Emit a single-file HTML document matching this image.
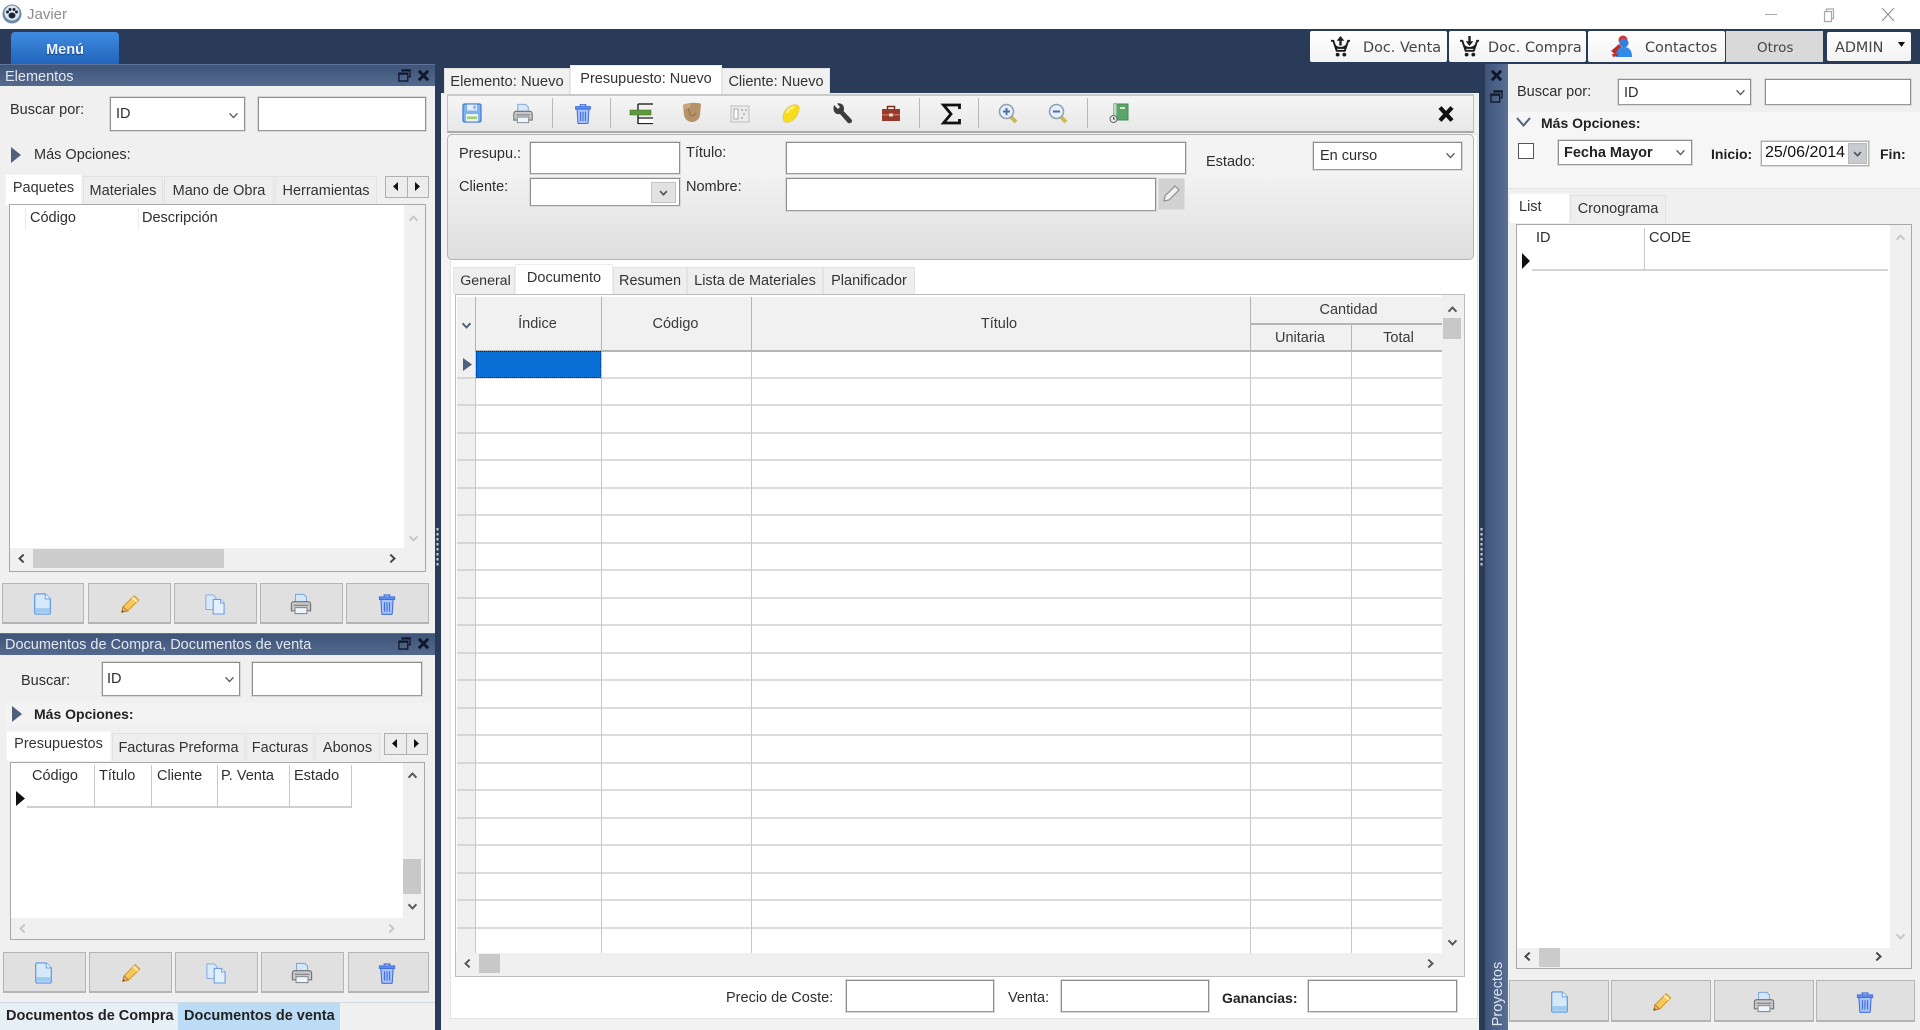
<!DOCTYPE html>
<html lang="es"><head><meta charset="utf-8"><title>Javier</title>
<style>
html,body{margin:0;padding:0;width:1920px;height:1030px;overflow:hidden;background:#2a3b59}
*{box-sizing:border-box}
body{position:relative;font-family:"Liberation Sans",sans-serif;font-size:14.5px;color:#2e2e2e}
.b{position:absolute}
.t{position:absolute;white-space:nowrap;line-height:18px;height:18px}
.bold{font-weight:bold;color:#222;font-size:14px}
.in{position:absolute;background:#fff;border:1px solid #8e8e8e;border-bottom-color:#9a9a9a;box-shadow:0 0 0 1px #d8d8d8}
.btn{position:absolute;background:#e0e0e0;border:1px solid #b4b4b4;border-bottom-width:2px}
.tab{position:absolute;background:#eeeeee;border:1px solid #e2e2e2;border-bottom:0;text-align:center;white-space:nowrap;color:#333}
.tab.on{background:#fff;border-color:#e8e8e8;color:#333}
.hd{position:absolute;height:22px;background:linear-gradient(#3f5479,#54698f);border-top:1px solid #5f7398}
.hd span{position:absolute;left:5px;top:2px;line-height:19px;color:#e4e8ee;font-size:14.5px;white-space:nowrap}
.top{position:absolute;background:linear-gradient(#fff,#f3f3f3);border-radius:2px;font-family:"DejaVu Sans",sans-serif;font-size:14.4px;color:#444}
.gh{position:absolute;background:#f1f1f1;border-right:1px solid #b5b5b5;border-bottom:2px solid #b5b5b5;text-align:center;color:#3a3a3a}
svg{position:absolute;overflow:visible}
</style></head><body>

<svg width="0" height="0" style="position:absolute">
<defs>
<symbol id="doc" viewBox="0 0 20 24"><path d="M1.500 2.500a1.500 1.500 0 0 1 1.500-1.500h10l5.500 5.500v15a1.500 1.500 0 0 1-1.500 1.500h-14a1.500 1.500 0 0 1-1.500-1.500z" fill="#d6e9fb" stroke="#5a97e4" stroke-width="1.300"/><path d="M13 1v5.500h5.500" fill="#eef6ff" stroke="#5a97e4"/><path d="M2.500 16.500h15v5h-15z" fill="#9ccbf2"/></symbol>
<symbol id="pen" viewBox="0 0 24 24"><path d="M3 21l1.500-6L16.500 3l5 4.500L9.500 19.500z" fill="#f7c95a" stroke="#d69a2c" stroke-width="1.200"/><path d="M14.500 5l5 4.500" stroke="#fff1b8" stroke-width="2"/><path d="M3 21l1.500-6 4.800 4.500z" fill="#e8b07a" stroke="#c27b2f"/><path d="M3 21l.6-2.500 2 1.900z" fill="#6b4a22"/></symbol>
<symbol id="copy" viewBox="0 0 22 24"><path d="M1 2h8l3 3v13H1z" fill="#d9eafb" stroke="#7da6e2"/><path d="M9 7h8l4 4v12H9z" fill="#e2effc" stroke="#6f9be0" stroke-width="1.200"/><path d="M17 7v4h4" fill="#f3f9ff" stroke="#6f9be0"/></symbol>
<symbol id="print" viewBox="0 0 24 24"><path d="M6 1.500h9l3 3V11H6z" fill="#d4e7fa" stroke="#7aa2d8"/><path d="M1.500 12a2.500 2.500 0 0 1 2.500-2.500h16a2.500 2.500 0 0 1 2.500 2.500v7.500h-21z" fill="#c9c9c9" stroke="#6f6f6f" stroke-width="1.200"/><path d="M4 13.500h16" stroke="#8a8a8a" stroke-width="1.500"/><path d="M5.500 16h13v6.500h-13z" fill="#eef5fc" stroke="#7a7f88"/></symbol>
<symbol id="trash" viewBox="0 0 20 24"><path d="M7 3.500V2h6v1.500" fill="none" stroke="#3f6fe0" stroke-width="1.500"/><path d="M1.500 4h17v3h-17z" fill="#5f8cef" stroke="#3f6fe0"/><path d="M3.200 7h13.600l-1 15.500a1 1 0 0 1-1 1H5.200a1 1 0 0 1-1-1z" fill="#a9c4f8" stroke="#3f6fe0" stroke-width="1.200"/><path d="M7.200 10v10.500M10 10v10.500M12.800 10v10.500" stroke="#3f6fe0" stroke-width="1.300"/></symbol>
<symbol id="chev" viewBox="0 0 12 8"><path d="M1.500 1.500L6 6.300l4.500-4.800" fill="none" stroke="#555" stroke-width="1.500"/></symbol>
<symbol id="cup" viewBox="0 0 12 8"><path d="M1.500 6.500L6 1.700l4.500 4.800" fill="none" stroke="currentColor" stroke-width="2.200"/></symbol>
<symbol id="cdn" viewBox="0 0 12 8"><path d="M1.500 1.500L6 6.300l4.500-4.800" fill="none" stroke="currentColor" stroke-width="2.200"/></symbol>
<symbol id="cl" viewBox="0 0 8 12"><path d="M6.500 1.500L1.700 6l4.800 4.500" fill="none" stroke="currentColor" stroke-width="2.200"/></symbol>
<symbol id="cr" viewBox="0 0 8 12"><path d="M1.500 1.500L6.300 6l-4.800 4.500" fill="none" stroke="currentColor" stroke-width="2.200"/></symbol>
<symbol id="rest" viewBox="0 0 14 14"><path d="M4.500 3V1h8.500v7.500h-2.500" fill="none" stroke="#10182a" stroke-width="1.400"/><path d="M4 1.700h8.500" stroke="#10182a" stroke-width="2"/><path d="M1 4.500h9.500V13H1z" fill="none" stroke="#10182a" stroke-width="1.400"/><path d="M1 5.200h9.500" stroke="#10182a" stroke-width="2"/></symbol>
<symbol id="x" viewBox="0 0 14 14"><path d="M2 2l10 10M12 2L2 12" stroke="#10182a" stroke-width="3.200"/></symbol>
<symbol id="cart" viewBox="0 0 22 24"><path d="M1 6h2.500l3.500 10.500h8.500L19 6h2" fill="none" stroke="#1c1c1c" stroke-width="2"/><path d="M5 9.500c3 4 9 4 12 0l-1.500 5h-9z" fill="#1c1c1c"/><path d="M11 3v8" stroke="#1c1c1c" stroke-width="2.500"/><path d="M7 6l4-5 4 5z" fill="#1c1c1c"/><circle cx="8" cy="20.500" r="2" fill="#1c1c1c"/><circle cx="15" cy="20.500" r="2" fill="#1c1c1c"/></symbol>
<symbol id="cart2" viewBox="0 0 22 24"><path d="M1 6h2.500l3.500 10.500h8.500L19 6h2" fill="none" stroke="#1c1c1c" stroke-width="2"/><path d="M5 9.500c3 4 9 4 12 0l-1.500 5h-9z" fill="#1c1c1c"/><path d="M11 1v7" stroke="#1c1c1c" stroke-width="2.500"/><path d="M7 6.500l4 5 4-5z" fill="#1c1c1c"/><circle cx="8" cy="20.500" r="2" fill="#1c1c1c"/><circle cx="15" cy="20.500" r="2" fill="#1c1c1c"/></symbol>
</defs>
</svg>

<!-- title bar -->
<div class="b" style="left:0;top:0;width:1920px;height:29px;background:#fff"></div>
<svg style="left:2px;top:4px" width="20" height="20" viewBox="0 0 20 20"><circle cx="10" cy="10" r="9.500" fill="#6d8aa8"/><circle cx="10" cy="9" r="7.500" fill="#dfe6ee"/><ellipse cx="10" cy="11.500" rx="3.500" ry="3" fill="#1d2530"/><circle cx="5.500" cy="8" r="1.500" fill="#1d2530"/><circle cx="8" cy="5.500" r="1.500" fill="#1d2530"/><circle cx="12" cy="5.500" r="1.500" fill="#1d2530"/><circle cx="14.500" cy="8" r="1.500" fill="#1d2530"/></svg>
<div class="t" style="left:27px;top:6px;color:#8c8c8c;font-size:15px">Javier</div>
<svg style="left:1764px;top:8px" width="150" height="14" viewBox="0 0 150 14"><path d="M1 6.500h12" stroke="#a8a8a8"/><path d="M60.500 3.500h7v10h-7zM62.500 3.500v-2.500h7v9.500h-2" fill="none" stroke="#a8a8a8" stroke-width="1.200"/><path d="M118 0l12 13M130 0l-12 13" stroke="#8c8c8c" stroke-width="1"/></svg>

<!-- menu -->
<div class="b" style="left:11px;top:32px;width:108px;height:33px;border-radius:4px 4px 0 0;background:linear-gradient(#3f8be0,#2064ba);color:#eef4fb;font-weight:bold;font-size:14.5px;text-align:center;line-height:37px;text-shadow:0 1px 1px #123a70">Menú</div>

<!-- top buttons -->
<div class="top" style="left:1310px;top:31px;width:137px;height:31px"><svg style="left:20px;top:4px" width="21" height="23"><use href="#cart"/></svg><span class="t" style="left:53px;top:8px">Doc. Venta</span></div>
<div class="top" style="left:1449px;top:31px;width:137px;height:31px"><svg style="left:10px;top:4px" width="21" height="23"><use href="#cart2"/></svg><span class="t" style="left:39px;top:8px">Doc. Compra</span></div>
<div class="top" style="left:1588px;top:31px;width:137px;height:31px"><svg style="left:21px;top:3px" width="24" height="24" viewBox="0 0 24 24"><circle cx="14" cy="6" r="4.500" fill="#e0322e"/><path d="M2 17l8-7 3 4-7 6z" fill="#b92c2a"/><circle cx="15" cy="9" r="4.500" fill="#2f80e0"/><path d="M7 23c0-7 3-10 8-10s8 3 8 10z" fill="#2f8ae8"/><path d="M3 20l6-1 0 3-5 1z" fill="#c22f2b"/></svg><span class="t" style="left:57px;top:8px">Contactos</span></div>
<div class="top" style="left:1726px;top:31px;width:97px;height:31px;background:#d9d9d9;border-radius:0"><span class="t" style="left:31px;top:8px;font-size:13.5px">Otros</span></div>
<div class="top" style="left:1827px;top:32px;width:84px;height:29px"><span class="t" style="left:8px;top:7px">ADMIN</span><svg style="left:71px;top:10px" width="7" height="5"><path d="M0 0h7L3.500 5z" fill="#111"/></svg></div>

<!-- LEFT PANEL -->
<div class="b" style="left:0;top:64px;width:435px;height:966px;background:#f0f0f0"></div>
<div class="hd" style="left:0;top:64px;width:435px"><span style="top:3px">Elementos</span></div>
<svg style="left:398px;top:69px" width="13" height="13"><use href="#rest"/></svg>
<svg style="left:417px;top:69px" width="13" height="13"><use href="#x"/></svg>
<div class="t" style="left:10px;top:101px">Buscar por:</div>
<div class="in" style="left:110px;top:97px;width:135px;height:34px"></div>
<div class="t" style="left:116px;top:105px">ID</div>
<svg style="left:228px;top:112px" width="11" height="7"><use href="#chev"/></svg>
<div class="in" style="left:258px;top:97px;width:168px;height:34px"></div>
<svg style="left:11px;top:147px" width="10" height="16"><path d="M0 0l10 8-10 8z" fill="#4f5f7c"/></svg>
<div class="t" style="left:34px;top:146px">Más Opciones:</div>

<div class="tab on" style="left:5px;top:174px;width:77px;height:31px;line-height:26px;border-color:#f4f4f4">Paquetes</div>
<div class="tab" style="left:83px;top:176px;width:80px;height:28px;line-height:28px">Materiales</div>
<div class="tab" style="left:164px;top:176px;width:110px;height:28px;line-height:28px">Mano de Obra</div>
<div class="tab" style="left:275px;top:176px;width:102px;height:28px;line-height:28px">Herramientas</div>
<div class="b" style="left:385px;top:176px;width:44px;height:22px;background:#ececec;border:1px solid #b0b0b0"></div>
<div class="b" style="left:407px;top:176px;width:1px;height:22px;background:#b0b0b0"></div>
<svg style="left:393px;top:182px" width="6" height="9"><path d="M5 0v9L0 4.500z" fill="#111"/></svg>
<svg style="left:415px;top:182px" width="6" height="9"><path d="M0 0v9l5-4.500z" fill="#111"/></svg>

<div class="b" style="left:9px;top:204px;width:417px;height:368px;background:#fff;border:1px solid #a8a8a8"></div>
<div class="b" style="left:404px;top:205px;width:21px;height:344px;background:#f0f0f0"></div>
<div class="b" style="left:10px;top:548px;width:415px;height:23px;background:#f0f0f0"></div>
<div class="b" style="left:33px;top:549px;width:191px;height:19px;background:#cdcdcd"></div>
<svg style="left:18px;top:553px;color:#444" width="7" height="11"><use href="#cl"/></svg>
<svg style="left:389px;top:553px;color:#444" width="7" height="11"><use href="#cr"/></svg>
<svg style="left:408px;top:215px;color:#c6c6c6" width="11" height="7"><use href="#cup"/></svg>
<svg style="left:408px;top:535px;color:#c6c6c6" width="11" height="7"><use href="#cdn"/></svg>
<div class="b" style="left:25px;top:208px;width:1px;height:22px;background:#ececec"></div>
<div class="b" style="left:138px;top:208px;width:1px;height:22px;background:#ececec"></div>
<div class="t" style="left:30px;top:209px">Código</div>
<div class="t" style="left:142px;top:209px">Descripción</div>

<div class="btn" style="left:2px;top:583px;width:82px;height:41px"></div>
<div class="btn" style="left:88px;top:583px;width:83px;height:41px"></div>
<div class="btn" style="left:174px;top:583px;width:83px;height:41px"></div>
<div class="btn" style="left:260px;top:583px;width:83px;height:41px"></div>
<div class="btn" style="left:346px;top:583px;width:83px;height:41px"></div>
<svg style="left:33px;top:593px" width="19" height="22"><use href="#doc"/></svg>
<svg style="left:119px;top:593px" width="22" height="22"><use href="#pen"/></svg>
<svg style="left:205px;top:593px" width="20" height="22"><use href="#copy"/></svg>
<svg style="left:290px;top:593px" width="22" height="22"><use href="#print"/></svg>
<svg style="left:378px;top:593px" width="18" height="22"><use href="#trash"/></svg>

<div class="hd" style="left:0;top:633px;width:435px"><span>Documentos de Compra, Documentos de venta</span></div>
<svg style="left:398px;top:637px" width="13" height="13"><use href="#rest"/></svg>
<svg style="left:417px;top:637px" width="13" height="13"><use href="#x"/></svg>
<div class="t" style="left:21px;top:672px">Buscar:</div>
<div class="in" style="left:102px;top:662px;width:138px;height:34px"></div>
<div class="t" style="left:107px;top:670px">ID</div>
<svg style="left:224px;top:676px" width="11" height="7"><use href="#chev"/></svg>
<div class="in" style="left:252px;top:662px;width:170px;height:34px"></div>
<div class="b" style="left:5px;top:703px;width:427px;height:23px;background:#f3f3f3"></div>
<svg style="left:12px;top:706px" width="10" height="16"><path d="M0 0l10 8-10 8z" fill="#4f5f7c"/></svg>
<div class="t bold" style="left:34px;top:705px">Más Opciones:</div>

<div class="tab on" style="left:6px;top:731px;width:105px;height:30px;line-height:25px;border-color:#f4f4f4">Presupuestos</div>
<div class="tab" style="left:112px;top:733px;width:133px;height:28px;line-height:28px">Facturas Preforma</div>
<div class="tab" style="left:246px;top:733px;width:68px;height:28px;line-height:28px">Facturas</div>
<div class="tab" style="left:315px;top:733px;width:65px;height:28px;line-height:28px">Abonos</div>
<div class="b" style="left:384px;top:733px;width:44px;height:22px;background:#ececec;border:1px solid #b0b0b0"></div>
<div class="b" style="left:406px;top:733px;width:1px;height:22px;background:#b0b0b0"></div>
<svg style="left:392px;top:739px" width="6" height="9"><path d="M5 0v9L0 4.500z" fill="#111"/></svg>
<svg style="left:414px;top:739px" width="6" height="9"><path d="M0 0v9l5-4.500z" fill="#111"/></svg>

<div class="b" style="left:10px;top:762px;width:415px;height:178px;background:#fff;border:1px solid #a8a8a8"></div>
<div class="b" style="left:403px;top:763px;width:21px;height:155px;background:#f0f0f0"></div>
<div class="b" style="left:11px;top:918px;width:413px;height:21px;background:#f0f0f0"></div>
<div class="b" style="left:403px;top:859px;width:18px;height:35px;background:#c8c8c8"></div>
<svg style="left:407px;top:772px;color:#555" width="11" height="7"><use href="#cup"/></svg>
<svg style="left:407px;top:903px;color:#555" width="11" height="7"><use href="#cdn"/></svg>
<svg style="left:19px;top:923px;color:#c6c6c6" width="7" height="11"><use href="#cl"/></svg>
<svg style="left:388px;top:923px;color:#c6c6c6" width="7" height="11"><use href="#cr"/></svg>
<div class="b" style="left:27px;top:765px;width:325px;height:43px;border-bottom:2px solid #d0d0d0"></div>
<div class="b" style="left:94px;top:765px;width:1px;height:43px;background:#c8c8c8"></div>
<div class="b" style="left:151px;top:765px;width:1px;height:43px;background:#c8c8c8"></div>
<div class="b" style="left:217px;top:765px;width:1px;height:43px;background:#c8c8c8"></div>
<div class="b" style="left:289px;top:765px;width:1px;height:43px;background:#c8c8c8"></div>
<div class="b" style="left:351px;top:765px;width:1px;height:43px;background:#c8c8c8"></div>
<div class="t" style="left:32px;top:767px">Código</div>
<div class="t" style="left:99px;top:767px">Título</div>
<div class="t" style="left:157px;top:767px">Cliente</div>
<div class="t" style="left:221px;top:767px">P. Venta</div>
<div class="t" style="left:294px;top:767px">Estado</div>
<svg style="left:16px;top:791px" width="9" height="15"><path d="M0 0l9 7.500-9 7.500z" fill="#111"/></svg>

<div class="btn" style="left:3px;top:952px;width:83px;height:41px"></div>
<div class="btn" style="left:89px;top:952px;width:83px;height:41px"></div>
<div class="btn" style="left:175px;top:952px;width:83px;height:41px"></div>
<div class="btn" style="left:261px;top:952px;width:83px;height:41px"></div>
<div class="btn" style="left:348px;top:952px;width:81px;height:41px"></div>
<svg style="left:34px;top:962px" width="19" height="22"><use href="#doc"/></svg>
<svg style="left:120px;top:962px" width="22" height="22"><use href="#pen"/></svg>
<svg style="left:206px;top:962px" width="20" height="22"><use href="#copy"/></svg>
<svg style="left:291px;top:962px" width="22" height="22"><use href="#print"/></svg>
<svg style="left:378px;top:962px" width="18" height="22"><use href="#trash"/></svg>

<div class="b" style="left:0;top:1002px;width:435px;height:28px;background:#f0f0f0;border-top:1px solid #cfd9e3"></div>
<div class="b" style="left:0;top:1003px;width:178px;height:27px;background:#e6eef6"></div>
<div class="b" style="left:178px;top:1003px;width:162px;height:27px;background:#bcdcf6"></div>
<div class="t bold" style="left:6px;top:1007px;font-size:14.5px">Documentos de Compra</div>
<div class="t bold" style="left:184px;top:1007px;font-size:14.5px">Documentos de venta</div>

<svg style="left:436px;top:528px" width="4" height="38"><path d="M1.500 0v38" stroke="#c6d0de" stroke-width="2" stroke-dasharray="2.500 2.500"/></svg>

<!-- CENTER -->
<div class="b" style="left:441px;top:93px;width:1038px;height:937px;background:#f2f2f2"></div>
<div class="b" style="left:450px;top:134px;width:1028px;height:885px;background:#fff;border:1px solid #e4e4e4"></div>
<div class="tab" style="left:444px;top:68px;width:126px;height:26px;line-height:27px;background:#f1f1f1"><span style="font-size:14.8px">Elemento: Nuevo</span></div>
<div class="tab on" style="left:570px;top:65px;width:152px;height:30px;line-height:27px">Presupuesto: Nuevo</div>
<div class="tab" style="left:722px;top:68px;width:108px;height:26px;line-height:27px;background:#f1f1f1">Cliente: Nuevo</div>

<div class="b" style="left:447px;top:94px;width:1027px;height:39px;background:linear-gradient(#f5f5f5,#e8e8e8);border:2px solid #bfbfbf;border-left-width:1px;border-right-width:1px;border-top-color:#c9c9c9;border-bottom-color:#a9a9a9"></div>
<div class="b" style="left:552px;top:98px;width:1px;height:30px;background:#b8b8b8"></div>
<div class="b" style="left:610px;top:98px;width:1px;height:30px;background:#b8b8b8"></div>
<div class="b" style="left:919px;top:98px;width:1px;height:30px;background:#b8b8b8"></div>
<div class="b" style="left:978px;top:98px;width:1px;height:30px;background:#b8b8b8"></div>
<div class="b" style="left:1087px;top:98px;width:1px;height:30px;background:#b8b8b8"></div>

<svg style="left:462px;top:103px" width="20" height="20" viewBox="0 0 20 20"><path d="M1 2.500A1.500 1.500 0 0 1 2.500 1h15A1.500 1.500 0 0 1 19 2.500v15a1.500 1.500 0 0 1-1.500 1.500h-15A1.500 1.500 0 0 1 1 17.500z" fill="#7fb3f0" stroke="#3f78d8" stroke-width="1.200"/><path d="M5 1.500h10v6H5z" fill="#e4eef8"/><path d="M11.500 2.500h2v3.500h-2z" fill="#7fa6d8"/><path d="M4 11h12v7.500H4z" fill="#eef5e6"/><path d="M5 13.500h10v2.500H5z" fill="#9fd06e"/></svg>
<svg style="left:512px;top:103px" width="22" height="21"><use href="#print"/></svg>
<svg style="left:574px;top:103px" width="18" height="21"><use href="#trash"/></svg>
<svg style="left:630px;top:103px" width="24" height="22" viewBox="0 0 24 22"><path d="M8 1h15M1 9h7M8 1v20" stroke="#333" stroke-width="1.500" fill="none"/><path d="M0 7h21v5H0z" fill="#5f9a3a" stroke="#3f6e26" stroke-width=".6"/><path d="M8 15h15M8 20.500h15" stroke="#222" stroke-width="1.300"/><path d="M9 16h14v4H9z" fill="#fff"/></svg>
<svg style="left:682px;top:102px" width="20" height="21" viewBox="0 0 20 21"><path d="M1 3c3-2 15-3 18-1l-1 11c-1 5-5 7-8 7s-7-2-8-7z" fill="#b59268"/><path d="M6 4l2 9 3 1 3-3" stroke="#8e6f4b" fill="none"/><path d="M1 3c3-1 5-1 8-1l-1 4-6 1z" fill="#c9a67c"/></svg>
<svg style="left:730px;top:105px" width="20" height="18" viewBox="0 0 20 18"><path d="M1 1h18v16H1z" fill="#ececec" stroke="#bcbcbc"/><path d="M4 4h4v10H4z" fill="#fff" stroke="#a8a8a8"/><path d="M11 5h2M15 5h2M13 9h2M11 13h2" stroke="#9a9a9a" stroke-width="1.300"/></svg>
<svg style="left:781px;top:103px" width="20" height="21" viewBox="0 0 20 21"><path d="M2 14C2 8 8 2 14 1.500c5 0 5 5 3 9-2 5-7 9-11 9-3 0-4-2-4-5.500z" fill="#f7dc1c" stroke="#dcc36a" stroke-width=".6"/><path d="M6 10c1-3 4-5 7-6" stroke="#fff49a" stroke-width="2" fill="none"/></svg>
<svg style="left:833px;top:103px" width="20" height="21" viewBox="0 0 20 21"><path d="M1 2l4 4 2-2-3-3.500c3-1 7 .5 7 5 0 1 0 2-.5 2.500l8 8.500c1 1 .5 3-1 3.500-1 .5-2 .5-3-.5l-7.500-8.500c-4 1-8-2-6-9z" fill="#3c3c3c"/></svg>
<svg style="left:881px;top:105px" width="20" height="17" viewBox="0 0 20 17"><path d="M6.500 4V1.500h7V4" fill="none" stroke="#7e2d22" stroke-width="1.500"/><path d="M1 4h18v12H1z" fill="#963a2c"/><path d="M1 9h18v1.500H1z" fill="#c76a55"/><path d="M8 8.500h4v3H8z" fill="#f0d8c8"/></svg>
<svg style="left:941px;top:103px" width="20" height="22" viewBox="0 0 20 22"><path d="M18.500 6V2H2.500L10 11 2.500 20h16v-4" fill="none" stroke="#111" stroke-width="2.800"/></svg>
<svg style="left:998px;top:103px" width="20" height="21" viewBox="0 0 20 21"><path d="M12 13l6 6" stroke="#c9b95c" stroke-width="4"/><circle cx="8.500" cy="8.500" r="7" fill="#e8eef6" stroke="#8ca0b8" stroke-width="1.500"/><path d="M5 8.500h7M8.500 5v7" stroke="#4d6ea8" stroke-width="2"/></svg>
<svg style="left:1048px;top:103px" width="20" height="21" viewBox="0 0 20 21"><path d="M12 13l6 6" stroke="#c9b95c" stroke-width="4"/><circle cx="8.500" cy="8.500" r="7" fill="#e8eef6" stroke="#8ca0b8" stroke-width="1.500"/><path d="M5 8.500h7" stroke="#4d6ea8" stroke-width="2"/></svg>
<svg style="left:1109px;top:103px" width="20" height="21" viewBox="0 0 20 21"><path d="M5 1h14v16H5z" fill="#5aa56a" stroke="#3f8a50"/><path d="M5 1h2.500v16H5z" fill="#bcd8c0"/><path d="M11 4h5v2h-5z" fill="#cfe8d0"/><circle cx="4.500" cy="16" r="3.500" fill="#e8e8e8" stroke="#666"/><path d="M4.500 14v2h1.500" stroke="#444" fill="none"/></svg>
<svg style="left:1437px;top:105px" width="18" height="18" viewBox="0 0 18 18"><path d="M3 2.500l12 13M15 2.500l-12 13" stroke="#0f0f0f" stroke-width="4.200"/></svg>

<div class="b" style="left:447px;top:134px;width:1027px;height:126px;background:linear-gradient(#f3f3f3 30%,#dedede);border:1px solid #b5b5b5;border-radius:5px"></div>
<div class="t" style="left:459px;top:145px">Presupu.:</div>
<div class="in" style="left:530px;top:142px;width:150px;height:32px"></div>
<div class="t" style="left:459px;top:178px">Cliente:</div>
<div class="in" style="left:530px;top:178px;width:150px;height:28px"></div>
<div class="b" style="left:651px;top:182px;width:25px;height:21px;background:#e2e2e2;border:1px solid #c2c2c2"></div>
<svg style="left:659px;top:190px;color:#555" width="9" height="6"><use href="#cdn"/></svg>
<div class="t" style="left:686px;top:144px">Título:</div>
<div class="in" style="left:786px;top:142px;width:400px;height:32px"></div>
<div class="t" style="left:686px;top:178px">Nombre:</div>
<div class="in" style="left:786px;top:178px;width:370px;height:33px"></div>
<div class="b" style="left:1158px;top:178px;width:27px;height:32px;background:#d2d2d2;border:1px solid #dedede"></div>
<svg style="left:1162px;top:184px" width="19" height="19" viewBox="0 0 19 19"><path d="M2 17l1-5L13 2l4 4L7 16z" fill="#f0f0f0" stroke="#8e8e8e" stroke-width="1.200"/></svg>
<div class="t" style="left:1206px;top:153px">Estado:</div>
<div class="in" style="left:1313px;top:142px;width:149px;height:28px"></div>
<div class="t" style="left:1320px;top:147px">En curso</div>
<svg style="left:1445px;top:152px" width="11" height="7"><use href="#chev"/></svg>

<div class="tab" style="left:453px;top:267px;width:62px;height:27px;line-height:27px;padding-left:3px"><span style="font-size:14.2px">General</span></div>
<div class="tab on" style="left:515px;top:264px;width:98px;height:31px;line-height:27px;border-color:#ececec">Documento</div>
<div class="tab" style="left:613px;top:267px;width:74px;height:27px;line-height:27px">Resumen</div>
<div class="tab" style="left:687px;top:267px;width:136px;height:27px;line-height:27px">Lista de Materiales</div>
<div class="tab" style="left:823px;top:267px;width:92px;height:27px;line-height:27px">Planificador</div>

<div class="b" style="left:455px;top:294px;width:1010px;height:683px;background:#fff;border:1px solid #bcbcbc"></div>
<div class="b" style="left:457px;top:297px;width:985px;height:53px;background:#f1f1f1"></div>
<div class="b" style="left:457px;top:297px;width:18px;height:656px;background:#f0f0f0"></div>
<div class="gh" style="left:475px;top:297px;width:127px;height:55px;line-height:54px;border-left:1px solid #b5b5b5"><span style="margin-left:-2px">Índice</span></div>
<div class="gh" style="left:602px;top:297px;width:150px;height:55px;line-height:54px;padding-right:2px">Código</div>
<div class="gh" style="left:752px;top:297px;width:499px;height:55px;line-height:54px;padding-right:4px">Título</div>
<div class="gh" style="left:1251px;top:297px;width:191px;height:28px;line-height:26px;border-right:0;padding-left:4px">Cantidad</div>
<div class="gh" style="left:1251px;top:325px;width:101px;height:27px;line-height:26px;padding-right:2px">Unitaria</div>
<div class="gh" style="left:1352px;top:325px;width:90px;height:27px;line-height:26px;border-right:0;padding-left:3px">Total</div>
<svg style="left:461px;top:322px;color:#4f5f7c" width="11" height="7"><use href="#cdn"/></svg>
<svg style="left:457px;top:352px" width="985" height="602" viewBox="457 352 985 602">
<path d="M457 378H1442M457 405H1442M457 433H1442M457 460H1442M457 488H1442M457 515H1442M457 543H1442M457 570H1442M457 598H1442M457 625H1442M457 653H1442M457 680H1442M457 708H1442M457 735H1442M457 763H1442M457 790H1442M457 818H1442M457 845H1442M457 873H1442M457 900H1442M457 928H1442" stroke="#c6c6c6" stroke-width="1.200" fill="none"/>
<path d="M475.5 352V953M601.5 352V953M751.5 352V953M1250.5 352V953M1351.5 352V953" stroke="#c8c8c8" fill="none"/>
</svg>
<div class="b" style="left:476px;top:351px;width:125px;height:27px;background:#0a6fd6;border:1px dotted #10203a"></div>
<svg style="left:463px;top:358px" width="9" height="13"><path d="M0 0l9 6.500L0 13z" fill="#4f5f7c"/></svg>
<div class="b" style="left:1442px;top:295px;width:22px;height:681px;background:#f0f0f0"></div>
<div class="b" style="left:456px;top:953px;width:1008px;height:23px;background:#f0f0f0"></div>
<div class="b" style="left:479px;top:954px;width:21px;height:19px;background:#c8c8c8"></div>
<div class="b" style="left:1443px;top:318px;width:18px;height:21px;background:#c8c8c8"></div>
<svg style="left:1447px;top:306px;color:#555" width="11" height="7"><use href="#cup"/></svg>
<svg style="left:1447px;top:939px;color:#555" width="11" height="7"><use href="#cdn"/></svg>
<svg style="left:464px;top:958px;color:#555" width="7" height="11"><use href="#cl"/></svg>
<svg style="left:1427px;top:958px;color:#555" width="7" height="11"><use href="#cr"/></svg>

<div class="t" style="left:726px;top:989px">Precio de Coste:</div>
<div class="in" style="left:846px;top:980px;width:148px;height:32px"></div>
<div class="t" style="left:1008px;top:989px">Venta:</div>
<div class="in" style="left:1061px;top:980px;width:148px;height:32px"></div>
<div class="t bold" style="left:1222px;top:989px">Ganancias:</div>
<div class="in" style="left:1308px;top:980px;width:149px;height:32px"></div>

<!-- SIDE STRIP -->
<div class="b" style="left:1479px;top:64px;width:6px;height:966px;background:#2a3b59"></div>
<div class="b" style="left:1485px;top:64px;width:23px;height:966px;background:linear-gradient(90deg,#3f5479,#5a6f96)"></div>
<svg style="left:1480px;top:528px" width="4" height="38"><path d="M1.500 0v38" stroke="#c6d0de" stroke-width="2" stroke-dasharray="2.500 2.500"/></svg>
<svg style="left:1490px;top:69px" width="13" height="13"><use href="#x"/></svg>
<svg style="left:1490px;top:90px" width="13" height="13"><use href="#rest"/></svg>
<div class="t" style="left:1498px;top:994px;color:#dfe5ee;transform:translate(-50%,-50%) rotate(-90deg);transform-origin:center;font-size:14.5px;height:auto">Proyectos</div>

<!-- RIGHT PANEL -->
<div class="b" style="left:1508px;top:64px;width:412px;height:966px;background:#f0f0f0"></div>
<div class="t" style="left:1517px;top:83px">Buscar por:</div>
<div class="in" style="left:1618px;top:79px;width:133px;height:26px"></div>
<div class="t" style="left:1624px;top:84px">ID</div>
<svg style="left:1735px;top:89px" width="11" height="7"><use href="#chev"/></svg>
<div class="in" style="left:1765px;top:79px;width:146px;height:26px"></div>
<div class="b" style="left:1508px;top:112px;width:412px;height:76px;background:#f6f6f6"></div>
<svg style="left:1516px;top:117px" width="15" height="10" viewBox="0 0 15 10"><path d="M1 1l6.500 7.500L14 1" fill="none" stroke="#4f5f7c" stroke-width="2"/></svg>
<div class="t bold" style="left:1541px;top:114px">Más Opciones:</div>
<div class="b" style="left:1518px;top:143px;width:16px;height:16px;background:#fff;border:1px solid #555"></div>
<div class="in" style="left:1558px;top:140px;width:134px;height:25px"></div>
<div class="t bold" style="left:1564px;top:144px;font-size:14.5px">Fecha Mayor</div>
<svg style="left:1675px;top:149px" width="11" height="7"><use href="#chev"/></svg>
<div class="t bold" style="left:1711px;top:145px">Inicio:</div>
<div class="in" style="left:1761px;top:141px;width:108px;height:25px;border-color:#b0b0b0"></div>
<div class="t" style="left:1765px;top:144px;font-size:16px;color:#111">25/06/2014</div>
<div class="b" style="left:1848px;top:143px;width:19px;height:21px;background:#c8ccd0;border:1px solid #b8b8b8"></div>
<svg style="left:1853px;top:151px;color:#555" width="9" height="6"><use href="#cdn"/></svg>
<div class="t bold" style="left:1880px;top:145px">Fin:</div>

<div class="b" style="left:1508px;top:188px;width:412px;height:1px;background:#e4e4e4"></div>
<div class="tab on" style="left:1509px;top:193px;width:61px;height:30px;line-height:26px;text-align:left;padding-left:9px;border-color:#f3f3f3">List</div>
<div class="tab" style="left:1570px;top:195px;width:96px;height:28px;line-height:26px">Cronograma</div>
<div class="b" style="left:1516px;top:224px;width:396px;height:745px;background:#fff;border:1px solid #a8a8a8"></div>
<div class="b" style="left:1890px;top:225px;width:21px;height:723px;background:#f0f0f0"></div>
<div class="b" style="left:1517px;top:948px;width:394px;height:20px;background:#f0f0f0"></div>
<div class="b" style="left:1539px;top:948px;width:21px;height:19px;background:#cbcbcb"></div>
<svg style="left:1895px;top:234px;color:#c6c6c6" width="11" height="7"><use href="#cup"/></svg>
<svg style="left:1895px;top:933px;color:#c6c6c6" width="11" height="7"><use href="#cdn"/></svg>
<svg style="left:1524px;top:951px;color:#444" width="7" height="11"><use href="#cl"/></svg>
<svg style="left:1875px;top:951px;color:#444" width="7" height="11"><use href="#cr"/></svg>
<div class="b" style="left:1532px;top:228px;width:356px;height:43px;border-bottom:2px solid #d4d4d4"></div>
<div class="b" style="left:1644px;top:228px;width:1px;height:43px;background:#c8c8c8"></div>
<div class="t" style="left:1536px;top:229px">ID</div>
<div class="t" style="left:1649px;top:229px">CODE</div>
<svg style="left:1522px;top:253px" width="8" height="16"><path d="M0 0l8 8-8 8z" fill="#111"/></svg>

<div class="btn" style="left:1509px;top:980px;width:100px;height:42px"></div>
<div class="btn" style="left:1611px;top:980px;width:100px;height:42px"></div>
<div class="btn" style="left:1714px;top:980px;width:100px;height:42px"></div>
<div class="btn" style="left:1816px;top:980px;width:99px;height:42px"></div>
<svg style="left:1550px;top:991px" width="19" height="22"><use href="#doc"/></svg>
<svg style="left:1651px;top:991px" width="22" height="22"><use href="#pen"/></svg>
<svg style="left:1753px;top:991px" width="22" height="22"><use href="#print"/></svg>
<svg style="left:1856px;top:991px" width="18" height="22"><use href="#trash"/></svg>

</body></html>
